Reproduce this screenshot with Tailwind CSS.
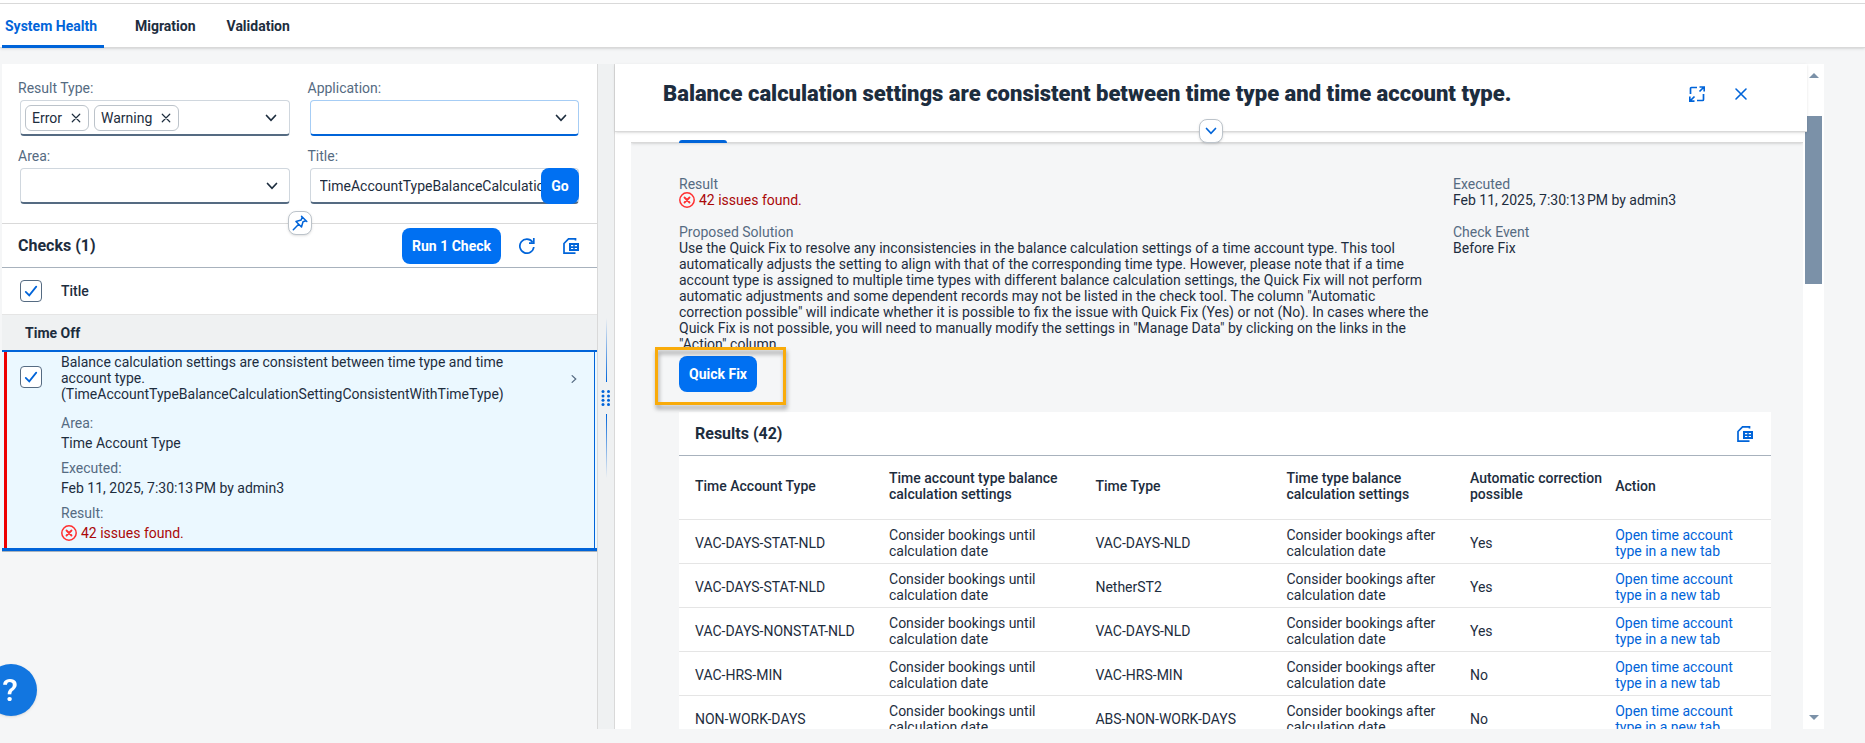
<!DOCTYPE html>
<html lang="en">
<head>
  <meta charset="UTF-8" />
  <meta name="viewport" content="width=device-width, initial-scale=1.0"/>
  <title>Check Tool</title>
  <script src="https://cdn.jsdelivr.net/npm/@tailwindcss/browser@4"></script>
</head>
<body class="h-screen flex flex-col overflow-hidden bg-[#f5f6f7] font-[Roboto,'Liberation_Sans',sans-serif] text-sm leading-4 text-[#1d2d3e]">

  <!-- shared icons -->
  <svg class="hidden">
    <symbol id="i-down" viewBox="0 0 16 16"><path d="M3.5 5.5 8 10.3l4.500-4.800" fill="none" stroke="currentColor" stroke-width="1.700" stroke-linecap="round"/></symbol>
    <symbol id="i-x" viewBox="0 0 16 16"><path d="m3 3 10 10M13 3 3 13" fill="none" stroke="currentColor" stroke-width="1.600" stroke-linecap="round"/></symbol>
    <symbol id="i-check" viewBox="0 0 16 16"><path d="m2 9 4 4 8-10" fill="none" stroke="currentColor" stroke-width="2" stroke-linecap="round"/></symbol>
    <symbol id="i-error" viewBox="0 0 16 16"><circle cx="8" cy="8" r="7.200" fill="none" stroke="currentColor" stroke-width="1.500"/><path d="m5.500 5.500 5 5M10.500 5.500l-5 5" fill="none" stroke="currentColor" stroke-width="1.800" stroke-linecap="round"/></symbol>
    <symbol id="i-export" viewBox="0 0 16 16"><path d="M12.500 2.500V.9H5.500L1 5.500v9.600h11.500" fill="none" stroke="currentColor" stroke-width="1.700"/><path d="M6 5h10v8H6Z" fill="currentColor"/><path d="M8 7.700h2.300M11.700 7.700H14M8 10.500h2.300M11.700 10.500H14" stroke="#fff" stroke-width="1.200"/></symbol>
  </svg>

  <header class="shrink-0 bg-white pt-[3px] relative z-10 border-b border-[#d9d9d9] shadow-sm">
    <nav class="flex gap-[31px] border-t border-[#d9d9d9] pl-[2px] font-bold">
      <a href="#" class="h-11 w-[102px] px-[3px] -mb-px pt-[14px] border-b-[3px] border-[#0064d9] text-[#0064d9]">System Health</a>
      <a href="#" class="h-[43px] pt-[14px]">Migration</a>
      <a href="#" class="h-[43px] pt-[14px]">Validation</a>
    </nav>
  </header>

  <main class="flex flex-1 min-h-0 pt-4 pl-[2px] pr-[41px] pb-[14px]">

    <!-- check list -->
    <section class="w-[595px] shrink-0">
      <form class="relative bg-white grid grid-cols-2 gap-x-5 gap-y-3 pt-4 pb-[19px] px-[18px] border-b border-[#d9d9d9]" onsubmit="return false">
        <div>
          <label for="result-type" class="block -ml-[2px] mb-1 text-[#556b82]">Result Type:</label>
          <div class="flex items-center gap-[5px] h-9 pl-1 pr-[10px] border border-[#d0d7de] border-b-2 border-b-[#556b82] rounded">
            <button type="button" class="flex items-center gap-2 h-[26px] px-[6px] border border-[#bcc3ca] rounded-md">Error <svg class="size-3"><use href="#i-x"/></svg></button>
            <button type="button" class="flex items-center gap-2 h-[26px] px-[6px] border border-[#bcc3ca] rounded-md">Warning <svg class="size-3"><use href="#i-x"/></svg></button>
            <input id="result-type" class="flex-1 min-w-0 h-6 outline-none">
            <svg class="size-4"><use href="#i-down"/></svg>
          </div>
        </div>
        <div>
          <label for="application" class="block -ml-[2px] mb-1 text-[#556b82]">Application:</label>
          <div class="relative">
            <select id="application" class="block w-full h-9 appearance-none border border-[#a6cdf5] border-b-2 border-b-[#0064d9] rounded"><option></option></select>
            <svg class="absolute right-[10px] top-[10px] size-4 pointer-events-none"><use href="#i-down"/></svg>
          </div>
        </div>
        <div>
          <label for="area" class="block -ml-[2px] mb-1 text-[#556b82]">Area:</label>
          <div class="relative">
            <select id="area" class="block w-full h-9 appearance-none border border-[#d0d7de] border-b-2 border-b-[#556b82] rounded"><option></option></select>
            <svg class="absolute right-[10px] top-[10px] size-4 pointer-events-none"><use href="#i-down"/></svg>
          </div>
        </div>
        <div>
          <label for="title" class="block -ml-[2px] mb-1 text-[#556b82]">Title:</label>
          <div class="flex h-9 border border-[#d0d7de] border-b-2 border-b-[#556b82] rounded">
            <input id="title" class="flex-1 min-w-0 pl-[9px] outline-none" value="TimeAccountTypeBalanceCalculationSettingConsistentWithTimeType">
            <button class="w-[38px] h-9 -mt-px -mr-px rounded-lg bg-[#0070f2] text-white font-bold">Go</button>
          </div>
        </div>
        <button type="button" aria-label="Pin" class="absolute left-1/2 -translate-x-1/2 -bottom-3 size-6 flex items-center justify-center bg-white border border-[#bcc3ca] rounded-lg shadow text-[#0064d9] z-10">
          <svg class="size-4 shrink-0" viewBox="0 0 16 16" fill="none" stroke="currentColor" stroke-width="1.500" stroke-linejoin="round" stroke-linecap="round"><path d="M9.500 1.200 14.800 6.500M10.200 2 9.200 5 4 6.500l5.500 5.500 1.500-5.200 3-1M6.700 9.300 1.300 14.700"/></svg>
        </button>
      </form>

      <div class="flex items-center h-11 pl-4 pr-[18px] bg-white border-b border-[#a8b2bd]">
        <h2 class="flex-1 text-base leading-5 font-bold">Checks (1)</h2>
        <button class="h-9 px-[10px] rounded-lg bg-[#0070f2] text-white font-bold">Run 1 Check</button>
        <button aria-label="Refresh" class="ml-[18px] text-[#0064d9]"><svg class="size-4" viewBox="0 0 16 16" fill="none" stroke="currentColor" stroke-width="1.700"><path d="M14.800 9A7 7 0 1 1 13.500 4M14.800 0v5.200H10"/></svg></button>
        <button aria-label="Export" class="ml-7 text-[#0064d9]"><svg class="size-4"><use href="#i-export"/></svg></button>
      </div>

      <div class="flex items-center h-[47px] pl-[18px] bg-white border-b border-[#e5e5e5] font-medium">
        <span class="relative size-[22px]"><input id="all" type="checkbox" checked class="block size-[22px] appearance-none bg-white border border-[#556b82] rounded"><svg class="absolute left-1 top-1 size-[14px] text-[#0064d9] pointer-events-none"><use href="#i-check"/></svg></span>
        <label for="all" class="pl-[19px]">Title</label>
      </div>
      <h3 class="h-[35px] pt-[10px] pl-[23px] bg-[#eff1f2] font-bold">Time Off</h3>

      <!-- selected check -->
      <div class="border-b border-[#a8b2bd]">
        <div class="flex border-t-2 border-b-[3px] border-[#0064d9] bg-[#ebf8ff] pl-[2px]">
          <div class="flex flex-1 border-l-[3px] border-l-[#ee0000] border-r border-r-[#0064d9] pl-[13px] pr-[14px] pt-[2px] pb-[5px] mr-[2px]">
            <span class="relative size-[22px] mt-3"><input type="checkbox" checked aria-label="Select check" class="block size-[22px] appearance-none bg-white border border-[#556b82] rounded"><svg class="absolute left-1 top-1 size-[14px] text-[#0064d9] pointer-events-none"><use href="#i-check"/></svg></span>
            <div class="flex-1 pl-[19px]">
              <p>Balance calculation settings are consistent between time type and time<br>account type.<br>(TimeAccountTypeBalanceCalculationSettingConsistentWithTimeType)</p>
              <dl class="mt-[11px] leading-5">
                <dt class="mt-[5px] text-[#556b82]">Area:</dt>
                <dd>Time Account Type</dd>
                <dt class="mt-[5px] text-[#556b82]">Executed:</dt>
                <dd>Feb 11, 2025, 7:30:13&#8239;PM by admin3</dd>
                <dt class="mt-[5px] text-[#556b82]">Result:</dt>
                <dd class="flex items-center gap-1 text-[#aa0808]"><svg class="size-4 text-[#ff3030]"><use href="#i-error"/></svg>42 issues found.</dd>
              </dl>
            </div>
            <svg class="size-3 mt-[19px] -rotate-90 text-[#556b82]"><use href="#i-down"/></svg>
          </div>
        </div>
      </div>
    </section>

    <!-- splitter -->
    <div class="w-[18px] shrink-0 flex flex-col items-center pt-[254px] border-x border-[#d9d9d9] bg-[#eff1f2]">
      <div class="w-px h-16 bg-linear-to-t from-[#0064d9] to-transparent"></div>
      <svg class="my-2 w-[10px] h-4 text-[#0064d9]" viewBox="0 0 10 16" fill="currentColor"><circle cx="2" cy="1.500" r="1.500"/><circle cx="7.500" cy="1.500" r="1.500"/><circle cx="2" cy="6" r="1.500"/><circle cx="7.500" cy="6" r="1.500"/><circle cx="2" cy="10.300" r="1.500"/><circle cx="7.500" cy="10.300" r="1.500"/><circle cx="2" cy="14.500" r="1.500"/><circle cx="7.500" cy="14.500" r="1.500"/></svg>
      <div class="w-px h-16 bg-linear-to-b from-[#0064d9] to-transparent"></div>
    </div>

    <!-- check details -->
    <section class="flex flex-1 min-w-0 bg-white">
      <div class="flex flex-col flex-1 min-w-0">
        <div class="relative z-10 shrink-0 -mr-1 h-[68px] pl-12 pr-[58px] pb-2 flex items-center bg-white border-b border-[#d9d9d9] shadow-sm">
          <h1 class="flex-1 text-[22px] leading-6 font-black">Balance calculation settings are consistent between time type and time account type.</h1>
          <button aria-label="Full screen" class="text-[#0064d9]"><svg class="size-4" viewBox="0 0 16 16" fill="none" stroke="currentColor" stroke-width="1.700"><path d="M8 1.500H2.500Q1.500 1.500 1.500 2.500V8M8 14.500h5.500q1 0 1-1V8M10.500 1H15.200V5.500M15 1l-4.500 4.500M.8 10.500v4.700H5.500M1 15l4.500-4.500"/></svg></button>
          <button aria-label="Close" class="ml-7 text-[#0064d9]"><svg class="size-4"><use href="#i-x"/></svg></button>
          <button aria-label="Expand header" class="absolute left-1/2 -translate-x-1/2 -bottom-3 size-6 flex items-center justify-center bg-white border border-[#bcc3ca] rounded-lg shadow text-[#0064d9]"><svg class="size-4"><use href="#i-down"/></svg></button>
        </div>

        <div class="flex-1 min-h-0 ml-4 overflow-hidden bg-[#f5f6f7]">
          <div class="flex items-end h-[11px] pl-12 bg-white border-b border-[#d9d9d9] shadow-sm">
            <div class="w-12 h-[3px] -mb-px rounded-t-sm bg-[#0064d9]"></div>
          </div>

          <div class="pt-[33px] pl-12 pr-8">
            <div class="flex gap-8">
              <div class="w-[742px] shrink-0">
                <h4 class="text-[#556b82]">Result</h4>
                <p class="flex gap-1 text-[#aa0808]"><svg class="size-4 text-[#ff3030]"><use href="#i-error"/></svg>42 issues found.</p>
                <h4 class="mt-4 text-[#556b82]">Proposed Solution</h4>
                <p class="whitespace-nowrap">Use the Quick Fix to resolve any inconsistencies in the balance calculation settings of a time account type. This tool<br>automatically adjusts the setting to align with that of the corresponding time type. However, please note that if a time<br>account type is assigned to multiple time types with different balance calculation settings, the Quick Fix will not perform<br>automatic adjustments and some dependent records may not be listed in the check tool. The column "Automatic<br>correction possible" will indicate whether it is possible to fix the issue with Quick Fix (Yes) or not (No). In cases where the<br>Quick Fix is not possible, you will need to manually modify the settings in "Manage Data" by clicking on the links in the</p>
                <p class="h-3 overflow-hidden">"Action" column.</p>
              </div>
              <div>
                <h4 class="text-[#556b82]">Executed</h4>
                <p>Feb 11, 2025, 7:30:13&#8239;PM by admin3</p>
                <h4 class="mt-4 text-[#556b82]">Check Event</h4>
                <p>Before Fix</p>
              </div>
            </div>

            <div class="relative mt-2 h-9">
              <button class="h-9 px-[10px] rounded-lg bg-[#0070f2] text-white font-bold">Quick Fix</button>
              <div class="absolute -left-6 -top-[9px] w-[131px] h-[58px] border-[3px] border-[#f9ab0a] drop-shadow-[1px_4px_2px_rgba(0,0,0,0.35)] pointer-events-none"></div>
            </div>

            <div class="mt-5 bg-white">
              <div class="flex items-center h-11 pl-4 pr-[18px] border-b border-[#a8b2bd]">
                <h2 class="flex-1 text-base leading-5 font-bold">Results (42)</h2>
                <button aria-label="Export" class="text-[#0064d9]"><svg class="size-4"><use href="#i-export"/></svg></button>
              </div>
              <table class="w-full table-fixed text-left">
                <thead>
                  <tr class="h-[63px] border-b border-[#e5e5e5] *:font-medium *:pb-[2px]">
                    <th class="w-[18.5%] pl-4">Time Account Type</th>
                    <th class="w-[18.9%] px-2">Time account type balance<br>calculation settings</th>
                    <th class="w-[17.5%] px-2">Time Type</th>
                    <th class="w-[16.8%] px-2">Time type balance<br>calculation settings</th>
                    <th class="w-[13.3%] pl-2 whitespace-nowrap">Automatic correction<br>possible</th>
                    <th class="px-2">Action</th>
                  </tr>
                </thead>
                <tbody id="rows"></tbody>
              </table>
            </div>
          </div>
        </div>
      </div>

      <!-- scrollbar -->
      <div class="w-[21px] shrink-0 flex flex-col items-center py-[9px]">
        <div class="border-x-[5px] border-x-transparent border-b-[5px] border-b-[#7b91a8]"></div>
        <div class="mt-[38px] w-[17px] h-[168px] bg-[#7b91a8]"></div>
        <div class="mt-auto border-x-[5px] border-x-transparent border-t-[5px] border-t-[#7b91a8]"></div>
      </div>
    </section>
  </main>

  <!-- help -->
  <button class="fixed -left-[15px] bottom-[27px] z-20 size-[52px] pr-[2px] rounded-full bg-[#1276e0] shadow text-white text-[32px] font-medium">?</button>

  <script>
    const rows = [
      ["VAC-DAYS-STAT-NLD", "VAC-DAYS-NLD", "Yes"],
      ["VAC-DAYS-STAT-NLD", "NetherST2", "Yes"],
      ["VAC-DAYS-NONSTAT-NLD", "VAC-DAYS-NLD", "Yes"],
      ["VAC-HRS-MIN", "VAC-HRS-MIN", "No"],
      ["NON-WORK-DAYS", "ABS-NON-WORK-DAYS", "No"]
    ];
    document.getElementById("rows").innerHTML = rows.map(r => `
      <tr class="h-11 border-b border-[#e5e5e5] *:pt-[3px]">
        <td class="pl-4">${r[0]}</td>
        <td class="px-2">Consider bookings until<br>calculation date</td>
        <td class="px-2">${r[1]}</td>
        <td class="px-2">Consider bookings after<br>calculation date</td>
        <td class="px-2">${r[2]}</td>
        <td class="px-2"><a href="#" class="text-[#0064d9]">Open time account<br>type in a new tab</a></td>
      </tr>`).join("");
  </script>
</body>
</html>
